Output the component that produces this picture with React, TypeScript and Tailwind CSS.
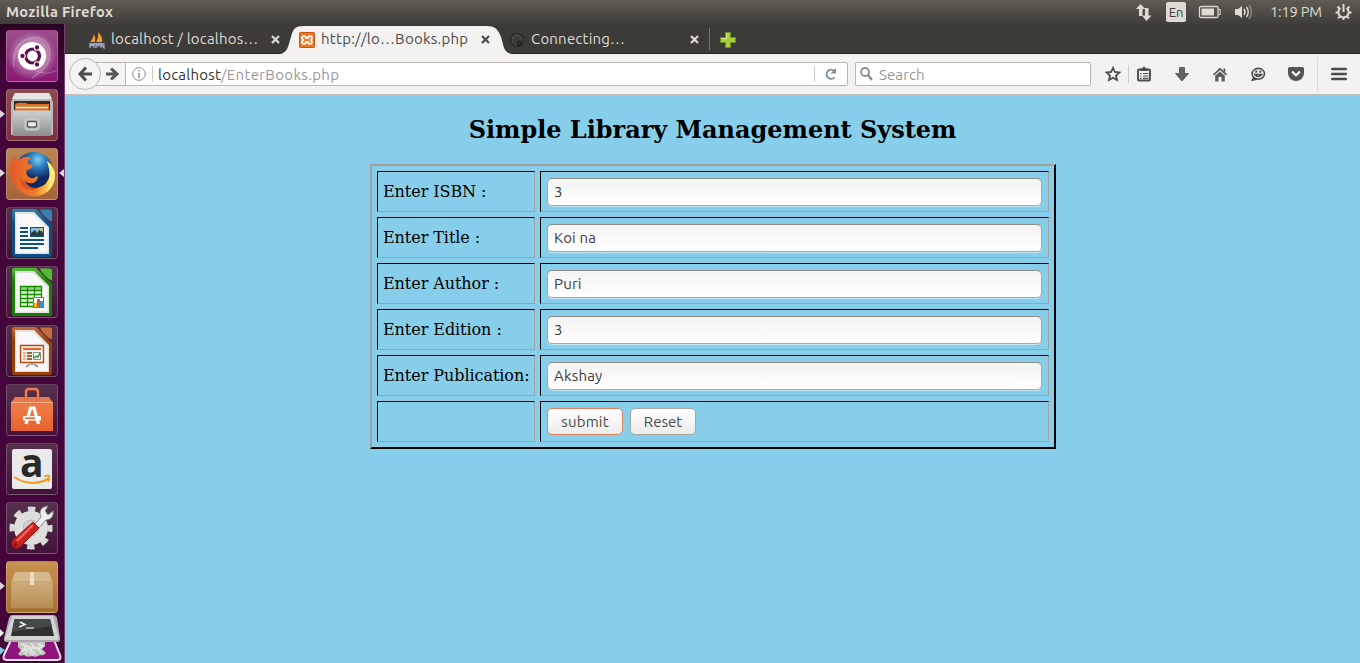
import type { ReactNode } from 'react';

const uiFont = "font-['Ubuntu','Noto_Sans',sans-serif]";

function Tile({ children, tone, open, focused }: { children: ReactNode; tone: string; open?: boolean; focused?: boolean }) {
  return (
    <div className="relative h-[52px] w-[64px] shrink-0 pl-[6px]">
      <div className={`h-[52px] w-[52px] rounded-[4px] border border-white/20 ${tone}`}>
        <svg viewBox="1 1 50 50" className="h-[50px] w-[50px] overflow-visible">{children}</svg>
      </div>
      {open && <svg className="absolute left-0 top-[20px] h-[10px] w-[5px]" viewBox="0 0 5 10"><path d="M0 1L5 5L0 9Z" fill="#ddd5dc" /></svg>}
      {focused && <svg className="absolute right-0 top-[20px] h-[10px] w-[5px]" viewBox="0 0 5 10"><path d="M5 1L0 5L5 9Z" fill="#ddd5dc" /></svg>}
    </div>
  );
}

function Doc({ dark, light, id, children }: { dark: string; light: string; id: string; children: ReactNode }) {
  return (
    <>
      <defs>
        <linearGradient id={id} x1="0" y1="0" x2="0" y2="1"><stop offset="0" stopColor={light} /><stop offset=".3" stopColor={dark} /><stop offset="1" stopColor={dark} /></linearGradient>
      </defs>
      <path d="M8 2H30L46 18V47Q46 50 43 50H9Q6 50 6 47V4Q6 2 8 2Z" fill={`url(#${id})`} />
      <path d="M34 2.500H44Q46 2.500 46 4.500V14.500Q43 14 40 10.500Q35 6 34 2.500Z" fill={light} />
      <path d="M9 5H28L43 20V47H9Z" fill="#e2e2e2" />
      <path d="M10.500 7H27L41.500 21.500V45.500H10.500Z" fill="#f8f8f8" />
      {children}
    </>
  );
}

function Launcher() {
  return (
    <aside className="flex h-[639px] w-[65px] shrink-0 flex-col gap-[7px] overflow-hidden border-r border-[#7b3f74] bg-[#3f0434] bg-linear-to-b from-[#2a0122] to-[#44063a] to-8% pt-[6px]">
      <Tile tone="bg-linear-to-b from-[#9a4c8a] to-[#8a1674]">
        <defs><radialGradient id="swirl"><stop offset="0" stopColor="#fff" stopOpacity=".7" /><stop offset="1" stopColor="#fff" stopOpacity="0" /></radialGradient></defs>
        <circle cx="26" cy="26" r="25" fill="url(#swirl)" />
        <path d="M8 37Q4 12 27 7Q42 6 44 21Q46 38 26 48Q40 32 38 20Q34 10 22 11Q10 15 8 37Z" fill="#fff" opacity=".15" />
        <path d="M8 37Q4 12 27 7Q42 6 44 21Q46 38 26 48M27 39Q39 47 51 40" fill="none" stroke="#e0b8da" strokeWidth=".8" opacity=".5" />
        <circle cx="26" cy="26" r="14" fill="#fff" />
        <circle cx="26.500" cy="26" r="7" fill="none" stroke="#5d0f4c" strokeWidth="3.200" />
        <g stroke="#fff" strokeWidth="1.100" fill="#5d0f4c"><circle cx="16.500" cy="26" r="2.700" /><circle cx="31" cy="17.500" r="2.700" /><circle cx="31" cy="34.500" r="2.700" /></g>
      </Tile>
      <Tile tone="bg-linear-to-b from-[#8d4b51] to-[#7c2f3c]" open>
        <defs><linearGradient id="cab" x1="0" y1="0" x2="0" y2="1"><stop stopColor="#d0d0d0" /><stop offset="1" stopColor="#8d8d8d" /></linearGradient></defs>
        <path d="M9 4H43L47 13V46H5V13Z" fill="#b9b9b9" /><path d="M9 4H43L46 10H6Z" fill="#e6e6e6" />
        <path d="M8 12H44V23H8Z" fill="#3b2a25" />
        <path d="M9 16L11 14H20L22 15H43V22H9Z" fill="#da7428" /><path d="M10 18.500H42" stroke="#fff0d7" strokeWidth="1.500" />
        <path d="M7 21.500H45V46Q45 47 44 47H8Q7 47 7 46Z" fill="url(#cab)" />
        <rect x="19" y="30" width="14" height="11" rx="2" fill="#bdbdbd" stroke="#d2d2d2" /><rect x="21.500" y="32.500" width="9" height="5.500" rx="1" fill="#eee" stroke="#565656" strokeWidth="1.300" />
      </Tile>
      <Tile tone="bg-linear-to-b from-[#bb8454] to-[#a4643b]" open focused>
        <defs>
          <radialGradient id="globe" cx=".6" cy=".2"><stop stopColor="#7fd0ef" /><stop offset=".45" stopColor="#2879bd" /><stop offset="1" stopColor="#102a60" /></radialGradient>
          <linearGradient id="fox" x1="0" y1="0" x2="1" y2="0"><stop stopColor="#e4572b" /><stop offset=".55" stopColor="#ef7d25" /><stop offset="1" stopColor="#fff16a" /></linearGradient>
        </defs>
        <circle cx="28" cy="23" r="19" fill="url(#globe)" />
        <path d="M7 9Q10 12 14 11Q20 7 25 10Q21 12 22 16Q27 16 27 18Q25 21 21 22Q19 26 23 29Q27 32 31 28Q33 30 29 34Q24 37 19 33Q22 41 31 40Q42 38 44 26Q45 19 41 13Q48 18 49 27Q49 40 38 46Q26 52 14 43Q3 35 4 20Q4 14 7 9Z" fill="url(#fox)" />
        <path d="M41 13Q48 18 49 27Q48 39 40 44Q47 30 41 13Z" fill="#ffe979" />
        <path d="M13 29Q19 38 28 30Q24 35 20 33Q22 41 33 40Q22 46 15 36Z" fill="#c83f26" opacity=".55" />
      </Tile>
      <Tile tone="bg-linear-to-b from-[#56304c] to-[#431239]">
        <Doc id="docBlue" dark="#0a5085" light="#3681ae">
          <g fill="#0b5383"><path d="M14 20h8v2h-8zM14 24h8v2h-8zM14 28h8v2h-8zM14 32h24v2H14zM14 36h24v2H14zM14 40h18v2H14z" /><path d="M24 20h14v10H24z" /></g>
          <path d="M25 21h12v8H25z" fill="#83c0e7" /><path d="M25 29v-3l4-3 2 3 3-4 3 4v3Z" fill="#303b3b" /><circle cx="35" cy="22.500" r="1.500" fill="#e8c82a" />
        </Doc>
      </Tile>
      <Tile tone="bg-linear-to-b from-[#56304c] to-[#431239]">
        <Doc id="docGreen" dark="#168300" light="#51bd37">
          <path d="M14 20h22v21H14z" fill="#e7f7df" /><path d="M14 20h22v4H14z" fill="#91d481" />
          <path d="M14.500 20.500H35.500V40.500H14.500ZM14 24.500H36M14 28.500H36M14 32.500H36M14 36.500H36M21.500 20V41M28.500 20V41" fill="none" stroke="#168a00" strokeWidth="1.300" />
          <rect x="27.500" y="31.500" width="10" height="10" fill="#fff" stroke="#777" /><path d="M28 37h3v4h-3z" fill="#ffb300" /><path d="M31 33h3v8h-3z" fill="#df5322" /><path d="M34 35h3v6h-3z" fill="#2598db" />
        </Doc>
      </Tile>
      <Tile tone="bg-linear-to-b from-[#56304c] to-[#431239]">
        <Doc id="docOrange" dark="#984006" light="#c56c38">
          <path d="M14.500 20.500h23v17h-23z" fill="#fff4eb" stroke="#bd4712" strokeWidth="1.400" /><path d="M17 24h18" stroke="#e1662d" strokeWidth="2" /><path d="M17 28h3M17 31h3M17 34h3" stroke="#ef925d" strokeWidth="1.600" /><path d="M21 28h5M21 31h5M21 34h5" stroke="#77310b" strokeWidth="1.600" /><path d="M27.500 27.500h7v7h-7z" fill="#fff" stroke="#888" /><path d="M28 33l2-2 2 1 2-4" fill="none" stroke="#299527" strokeWidth="1.400" /><path d="M26 38v2M24 39l-4 3M28 39l4 3" stroke="#777" strokeWidth="1.500" />
        </Doc>
      </Tile>
      <Tile tone="bg-linear-to-b from-[#56304c] to-[#431239]">
        <defs><linearGradient id="bag" x1="0" y1="0" x2="0" y2="1"><stop stopColor="#e27d52" /><stop offset=".3" stopColor="#ed7a45" /><stop offset="1" stopColor="#e9622c" /></linearGradient></defs>
        <path d="M9 13H43L47 19V47H5V19Z" fill="url(#bag)" /><path d="M5 18.500H47" stroke="#f2a884" /><path d="M20 17V8Q20 5 23 5H29Q32 5 32 8V17" fill="none" stroke="#c9512c" strokeWidth="2.800" /><path d="M20 17V8Q20 5 23 5H29Q32 5 32 8V17" fill="none" stroke="#e9875f" strokeWidth="1.600" />
        <path d="M20 40L24.500 24H28L32.500 40" fill="none" stroke="#fff" strokeWidth="3.200" /><path d="M17.500 32.500H34.500V36H17.500Z" fill="#fff" stroke="#fff" /><path d="M19 34.200H29" stroke="#ea6730" strokeWidth="1.600" />
      </Tile>
      <Tile tone="bg-linear-to-b from-[#56304c] to-[#431239]">
        <rect x="6" y="6" width="40" height="40" rx="2" fill="#eaeaea" />
        <text x="25.800" y="33.500" textAnchor="middle" fontFamily="Open Sans" fontWeight="700" fontSize="39" fill="#292929">a</text>
        <path d="M8 34Q25 45 43 35.500" fill="none" stroke="#f39b20" strokeWidth="2" /><path d="M38 33.500Q42 32 43.500 33Q44 36 42 39" fill="none" stroke="#f39b20" strokeWidth="1.600" />
      </Tile>
      <Tile tone="bg-linear-to-b from-[#56304c] to-[#431239]">
        <circle cx="25" cy="26" r="19" fill="none" stroke="#d8d8d8" strokeWidth="5" strokeDasharray="7.460 7.460" strokeDashoffset="3.700" />
        <circle cx="25" cy="26" r="13" fill="#efefef" stroke="#dedede" strokeWidth="8" /><circle cx="25" cy="26" r="8" fill="#cfcfcf" stroke="#b5b5b5" />
        <path d="M28 23L35 15Q32 8 38 5L42 4L39 9L42 13L47 9Q48 17 40 18L32 27Z" fill="#eee" stroke="#8c8c8c" />
        <path d="M27 20L33 26L14 45Q10 48 7 45Q4 42 7 38Z" fill="#cb201d" stroke="#9b1412" /><path d="M27 23L11 39" stroke="#ef6a62" strokeWidth="2" /><circle cx="9.500" cy="43" r="1.700" fill="#711" />
      </Tile>
      <Tile tone="bg-linear-to-b from-[#c79350] to-[#a66d2c]" open>
        <defs><linearGradient id="box" x1="0" y1="0" x2="0" y2="1"><stop stopColor="#d7b98c" /><stop offset="1" stopColor="#b58d50" /></linearGradient></defs>
        <path d="M9 11H43L47 21V47H5V21Z" fill="url(#box)" stroke="#b08b5a" strokeWidth=".7" /><path d="M9 11H43L46 20H6Z" fill="#d4b78b" /><path d="M5 20.500H47" stroke="#c6a576" /><path d="M24 11H28V24H24Z" fill="#ecdcbf" />
      </Tile>
      <div className="-mt-[5px] h-[49px] w-[64px] shrink-0">
        <svg viewBox="0 0 64 49" className="h-[49px] w-[64px]">
          <path d="M11 25H54L60 40Q62 45 57 45H7Q2 45 4 40Z" fill="#8e147d" stroke="#efe0ee" strokeWidth="2" />
          <path d="M18 27H45V31L42 34L46 38Q44 41 40 40Q36 43 32 41Q27 43 24 40Q20 42 18 39L21 35L18 32Z" fill="#c3c3be" />
          <path d="M21 29L27 31L22 36L28 34L25 39M31 28L34 32L30 35L36 39M38 29L43 31L38 34L42 38M28 31L31 33M34 34L38 32M29 37L33 40" fill="none" stroke="#e2e2de" strokeWidth="2" />
          <path d="M12 0H53Q56 0 57 3L60 23Q61 27 57 27H7Q3 27 4 23L9 3Q10 0 12 0Z" fill="#aaa" /><path d="M12 1H53L59 23Q59 25 57 25H7Q5 25 5 23Z" fill="#d3d3d3" />
          <path d="M14.500 4H50L54 21H11Z" fill="#303030" /><path d="M14.500 4H50L52 11L12 17Z" fill="#474747" /><path d="M20 7L25 9.500L19 12" fill="none" stroke="#eee" strokeWidth="1.600" /><path d="M26 13H34" stroke="#ccc" strokeWidth="1.400" />
          <path d="M0 14L4 18L0 22Z" fill="#eee" /><path d="M0 32L5 35L0 40Z" fill="#7ec9e9" />
        </svg>
      </div>
    </aside>
  );
}

function TopPanel() {
  return (
    <header className="flex h-[24px] items-center bg-linear-to-b from-[#5f5c52] to-[#3f3e39] pr-[8px] text-[#dfdbd2]">
      <div className="w-[1135px] whitespace-nowrap pl-[6px] text-[14.667px] font-bold leading-[22px] tracking-[0.31px]">Mozilla Firefox</div>
      <svg className="h-[18px] w-[17px]" viewBox="0 0 17 18" fill="currentColor"><path d="M5.500 1L10.500 6H7.500V13H4V6H1Z" /><path d="M11.500 18L7 12.500H10V5H13.500V12.500H16.500Z" /></svg>
      <div className="ml-[14px] flex h-[20px] w-[20px] items-center justify-center rounded-[2px] bg-[#dfdbd2] text-[13px] leading-none text-[#3c3b37]">En</div>
      <svg className="ml-[12px] h-[14px] w-[24px]" viewBox="0 0 24 14"><rect x="1.500" y="1.500" width="18.500" height="11" rx="1.500" fill="none" stroke="currentColor" strokeWidth="1.300" /><path d="M3.500 3.500H16V10.500H3.500Z" fill="currentColor" /><path d="M20.500 4.500H22.200V9.500H20.500" fill="none" stroke="currentColor" /></svg>
      <svg className="ml-[12px] h-[16px] w-[18px]" viewBox="-1 0 18 16" fill="none" stroke="currentColor" strokeWidth="1.400"><path d="M0 5H3L7 2V14L3 11H0Z" fill="currentColor" stroke="none" /><path d="M9 5Q11 8 9 11" /><path d="M11.500 3Q15 8 11.500 13" /><path d="M14 1Q19 8 14 15" opacity=".4" /></svg>
      <div className="ml-[18px] w-[65px] whitespace-nowrap text-[14.667px] leading-[22px] tracking-[-0.2px]">1:19 PM</div>
      <svg className="h-[16px] w-[17px]" viewBox="0 0 17 16" fill="none" stroke="currentColor"><path d="M5.500 4A5.200 5.200 0 1 0 11.500 4" strokeWidth="2.100" /><path d="M8.500 0V8" strokeWidth="2" /><path d="M.5 8.500h2.500M14 8.500h2.500M8.500 14v2M2.500 2.500l2 2M14.500 2.500l-2 2M3 14.500l1.700-2M14 14.500l-1.700-2" strokeWidth="1.900" /></svg>
    </header>
  );
}

function Close() {
  return <svg className="mt-[2px] h-[9px] w-[9px] shrink-0" viewBox="0 0 9 9"><path d="M1 1L8 8M8 1L1 8" stroke="currentColor" strokeWidth="2.200" /></svg>;
}

function Tabs() {
  return (
    <div className="flex h-[30px] items-center border-b border-[#24231f] bg-[#3c3b37] text-[15px] text-[#dfdbd2]">
      <div className="flex h-[30px] w-[213px] items-center pl-[23px]">
        <svg className="mt-[2px] h-[18px] w-[18px] shrink-0" viewBox="0 0 18 18"><path d="M2 11Q5 8 6 3Q8 7 7 11ZM8 11Q11 6 10 1Q15 6 14 11Z" fill="#f79b2d" /><path d="M1 12H17L15 14H3Z" fill="#8c8eb6" /><path d="M2 17V13L4 15L6 13V17M8 17V13H11V15H8M13 17V13L16 17V13" fill="none" stroke="#aeb0d1" strokeWidth="1.200" /></svg>
        <span className="ml-[5px] mt-[2px] w-[160px] shrink-0 whitespace-nowrap tracking-[0.19px]">localhost / localhos…</span>
        <Close />
      </div>
      <div className="relative flex h-[30px] w-[236px] items-center text-[#4c4c4c]">
        <svg className="absolute left-0 top-0 h-[30px] w-[236px]" viewBox="0 0 236 30"><path d="M0 30C10 30 10 22 13 13C15 5 17 2 26 2H208C217 2 220 5 223 13C226 22 225 30 236 30Z" fill="#f3f2f1" /></svg>
        <svg className="relative ml-[21px] mt-[2px] h-[16px] w-[16px] shrink-0" viewBox="0 0 16 16"><rect x=".5" y=".5" width="15" height="15" rx="1" fill="#f37623" stroke="#c95412" /><path d="M5.500 4.200H4.500Q3 4.200 3 5.700Q3 7 4.200 8Q3 9 3 10.300Q3 11.800 4.500 11.800H5.500Q6.800 11.800 6.800 10.200H9.200Q9.200 11.800 10.500 11.800H11.500Q13 11.800 13 10.300Q13 9 11.800 8Q13 7 13 5.700Q13 4.200 11.500 4.200H10.500Q9.200 4.200 9.200 5.800H6.800Q6.800 4.200 5.500 4.200Z" fill="none" stroke="#fff" strokeWidth="1.800" /></svg>
        <span className="relative ml-[6px] mt-[2px] w-[160px] shrink-0 whitespace-nowrap tracking-[0.26px]">http://lo…Books.php</span>
        <span className="relative flex"><Close /></span>
      </div>
      <div className="flex h-[30px] w-[195px] items-center">
        <svg className="-ml-[5px] mt-[2px] h-[16px] w-[16px]" viewBox="0 0 16 16"><circle cx="8" cy="8" r="6.500" fill="#3c3b37" stroke="#2c2b28" strokeWidth="1.500" /><circle cx="8" cy="8" r="5" fill="none" stroke="#55544f" /><circle cx="10.500" cy="11.500" r="2.500" fill="#31302d" stroke="#1f1e1c" /></svg>
        <span className="ml-[6px] mt-[2px] w-[159px] whitespace-nowrap tracking-[0.2px]">Connecting…</span>
        <Close />
      </div>
      <div className="h-[22px] w-px bg-[#77746d]" />
      <svg className="ml-[10px] mt-[2px] h-[16px] w-[16px]" viewBox="0 0 16 16"><path d="M5.500 .5H10.500V5.500H15.500V10.500H10.500V15.500H5.500V10.500H.5V5.500H5.500Z" fill="#a9cf38" stroke="#6b8f20" /><path d="M6.500 2V6.500H2" fill="none" stroke="#d5ea83" /></svg>
    </div>
  );
}

function Toolbar() {
  const cell = 'flex w-[38px] shrink-0 items-center justify-center';
  return (
    <div className="flex h-[41px] items-center border-b border-[#c4c0bb] bg-[#f3f2f1] text-[#4c4c4c]">
      <div className="relative z-10 ml-[4px] flex h-[32px] w-[32px] shrink-0 items-center justify-center rounded-full border border-[#bbb8b3] bg-[#f5f4f3]">
        <svg className="h-[16px] w-[16px]" viewBox="0 0 16 16" fill="none" stroke="currentColor" strokeWidth="3"><path d="M9 1.500L3 8L9 14.500M3 8H15" /></svg>
      </div>
      <div className="-ml-[6px] flex h-[24px] w-[753px] items-center rounded-r-[2px] border border-[#bbb8b3] bg-white">
        <div className="flex h-[22px] w-[30px] items-center justify-end border-r border-[#bbb8b3] bg-[#f5f4f3] pr-[6px]">
          <svg className="h-[14px] w-[13px] shrink-0" viewBox="0 0 13 14" fill="none" stroke="#555" strokeWidth="3"><path d="M5 1.500L11 7L5 12.500M11 7H0" /></svg>
        </div>
        <svg className="ml-[6px] h-[14px] w-[14px]" viewBox="0 0 14 14" fill="none" stroke="#8b8b8b"><circle cx="7" cy="7" r="6.300" /><path d="M7 6V11M7 3V4.500" strokeWidth="1.500" /></svg>
        <div className="ml-[6px] h-[16px] w-px bg-[#ccc]" />
        <div className="ml-[5px] mt-[2px] w-[656px] whitespace-nowrap text-[15px] leading-[20px] tracking-[0.33px] text-[#999]"><span className="tracking-[0.22px] text-[#333]">localhost</span>/EnterBooks.php</div>
        <div className="h-[16px] w-px bg-[#ccc]" />
        <svg className="ml-[10px] h-[12px] w-[12px]" viewBox="0 0 12 12" fill="none" stroke="#8090a2" strokeWidth="2"><path d="M9.500 9.300A4.500 4.500 0 1 1 9 2.800" /><path d="M11 0V5.500H5.500Z" fill="#8090a2" stroke="none" /></svg>
      </div>
      <div className="ml-[7px] flex h-[24px] w-[236px] items-center rounded-[2px] border border-[#bbb8b3] bg-white">
        <svg className="ml-[4px] h-[14px] w-[13px]" viewBox="0 0 13 14" fill="none" stroke="#8c8c8c"><circle cx="5" cy="5" r="4" strokeWidth="1.800" /><path d="M8 8L12 13" strokeWidth="2.300" /></svg>
        <span className="ml-[6px] mt-[2px] text-[15px] leading-[20px] tracking-[0.1px] text-[#999]">Search</span>
      </div>
      <svg className="ml-[14px] h-[16px] w-[16px]" viewBox="0 0 16 16"><path d="M8 1.800L9.900 6L14.300 6.500L11 9.500L12 14L8 11.700L4 14L5 9.500L1.700 6.500L6.100 6Z" fill="none" stroke="currentColor" strokeWidth="1.800" /></svg>
      <div className="ml-[7px] h-[18px] w-px bg-[#cfcdca]" />
      <div className="flex w-[34px] items-center"><svg className="ml-[8px] h-[16px] w-[14px]" viewBox="0 0 14 16" fill="none" stroke="currentColor"><rect x="1" y="3.500" width="12" height="11" rx="1" fill="#f3f2f1" strokeWidth="1.900" /><path d="M3.500 3.500Q5.500 3 7 .8Q8.500 3 10.500 3.500V4.500H3.500Z" fill="currentColor" /><path d="M3 7.500h1.500M6 7.500h5.500M3 10h1.500M6 10h5.500M3 12.400h1.500M6 12.400h5.500" strokeWidth="1.100" /></svg></div>
      <div className={cell}><svg className="h-[15px] w-[14px]" viewBox="0 0 14 15"><path d="M4.500 .5H9.500V6.500H13.500L7 14L.5 6.500H4.500Z" fill="#626262" stroke="#4c4c4c" strokeWidth=".8" /></svg></div>
      <div className={cell}><svg className="h-[15px] w-[16px]" viewBox="0 0 16 15"><path d="M1.500 8L8 1.800L14.500 8" fill="none" stroke="currentColor" strokeWidth="1.600" /><path d="M11.500 1.500H13.200V5.500L11.500 4Z" fill="currentColor" /><path d="M3.200 8.800L8 4.500L12.800 8.800V14.500H9.500V10H6.500V14.500H3.200Z" fill="#5c5c5c" /></svg></div>
      <div className={cell}><svg className="h-[15px] w-[16px]" viewBox="0 0 16 15" fill="none" stroke="currentColor" strokeWidth="1.600"><ellipse cx="8.300" cy="6.800" rx="6.200" ry="5.400" /><path d="M3.500 10.500L1.500 13.500L7 12.500" fill="currentColor" strokeWidth="1" /><path d="M4.800 7.500Q8.300 11.500 11.800 7.500Z" strokeWidth="1.300" /><path d="M6.300 3.500V5.800M10.300 3.500V5.800" strokeWidth="1.900" /></svg></div>
      <div className={cell}><svg className="h-[14px] w-[16px]" viewBox="0 0 16 14"><path d="M1.500 0H14.500Q16 0 16 1.500V6A8 8 0 0 1 0 6V1.500Q0 0 1.500 0Z" fill="#555" /><path d="M4 4.500L8 8.300L12 4.500" fill="none" stroke="#fff" strokeWidth="2" /></svg></div>
      <div className="ml-[2px] h-[34px] w-px bg-[#dcdad7]" />
      <svg className="ml-[13px] h-[14px] w-[16px]" viewBox="0 0 16 14"><path d="M1.200 2H14.800M1.200 7H14.800M1.200 12H14.800" stroke="currentColor" strokeWidth="2.600" strokeLinecap="round" /></svg>
    </div>
  );
}

const fields = [
  { label: 'Enter ISBN :', value: '3' },
  { label: 'Enter Title :', value: 'Koi na' },
  { label: 'Enter Author :', value: 'Puri' },
  { label: 'Enter Edition :', value: '3' },
  { label: 'Enter Publication:', value: 'Akshay' },
];
const cellBorder = 'h-[41px] border border-t-black border-l-black border-r-[#a3a09e] border-b-[#a3a09e]';

function LibraryForm() {
  return (
    <main className="flex h-[568px] flex-col items-center bg-[#87ceeb] text-black font-['DejaVu_Serif',serif]">
      <h2 className="mt-[21px] h-[28px] whitespace-nowrap text-[24px] font-bold leading-[28px] tracking-[-0.03px]">Simple Library Management System</h2>
      <form className="mt-[20px] grid w-[686px] grid-cols-[158px_509px] gap-[5px] border-2 border-t-[#a3a09e] border-l-[#a3a09e] border-r-black border-b-black p-[5px]">
        {fields.map((f) => (
          <div key={f.label} className="contents">
            <label className={`${cellBorder} whitespace-nowrap pl-[5.5px] text-[16px] leading-[39px] tracking-[-0.06px]`}>{f.label}</label>
            <div className={`${cellBorder} px-[6px] pt-[6px]`}>
              <input defaultValue={f.value} className={`${uiFont} block h-[28px] w-[495px] rounded-[5px] border border-[#aaa6a2] border-t-[#8f8b87] bg-linear-to-b from-[#f3f3f3] to-white px-[6.5px] pb-px text-[15px] tracking-[0.2px] text-[#3c3c3c] shadow-[0_1px_0_rgba(255,255,255,.5)] outline-none`} />
            </div>
          </div>
        ))}
        <div className={cellBorder} />
        <div className={`${cellBorder} ${uiFont} flex gap-[7px] pl-[6px] pt-[6px] text-[15px] text-[#4c4c4c]`}>
          <button type="button" className="h-[27px] w-[76px] rounded-[5px] border border-[#df845f] bg-linear-to-b from-white to-[#ececeb] pl-px leading-[24px] tracking-[0.2px]">submit</button>
          <button type="button" className="h-[27px] w-[66px] rounded-[5px] border border-[#aaa6a2] bg-linear-to-b from-white to-[#ececeb] pl-px leading-[24px]">Reset</button>
        </div>
      </form>
    </main>
  );
}

export default function App() {
  return (
    <div className={`h-[663px] w-[1360px] overflow-hidden ${uiFont}`}>
      <TopPanel />
      <div className="flex">
        <Launcher />
        <div className="w-[1295px]">
          <Tabs />
          <Toolbar />
          <LibraryForm />
        </div>
      </div>
    </div>
  );
}
